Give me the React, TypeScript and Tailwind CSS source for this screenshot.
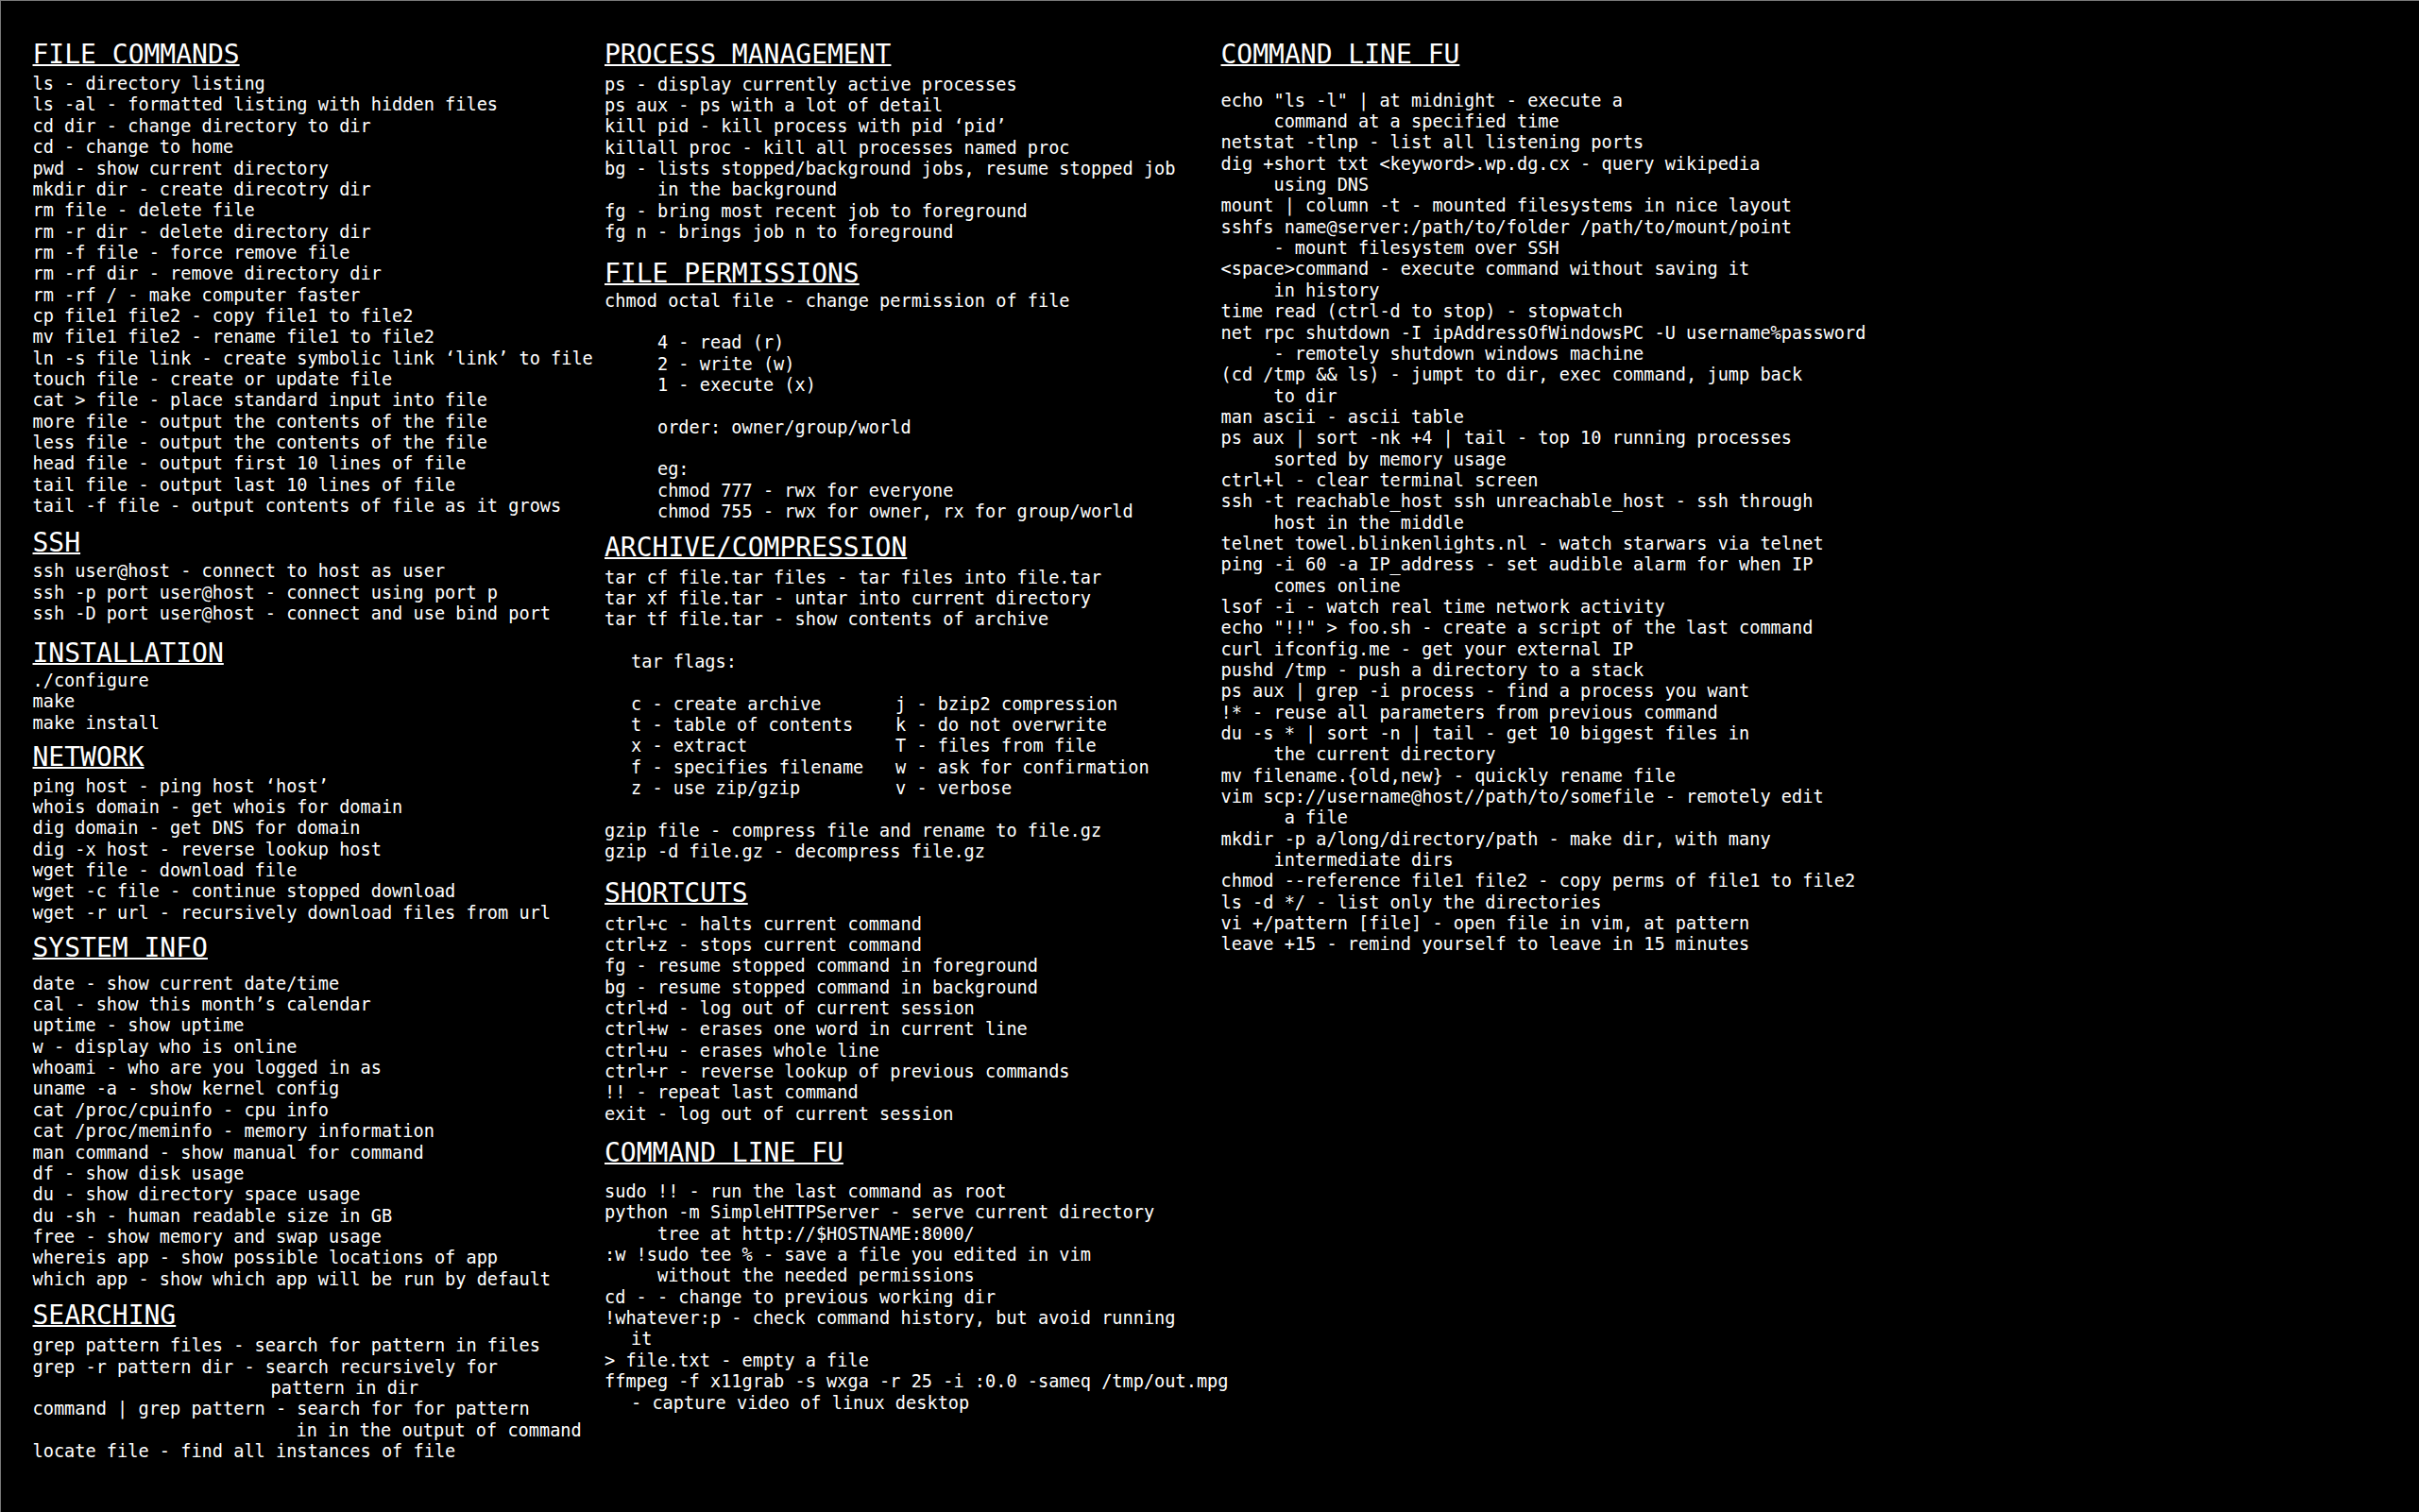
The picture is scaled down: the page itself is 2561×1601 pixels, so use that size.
import clsx from "clsx";
import type { ReactNode } from "react";

// one line of the sheet, fixed height so blank rows keep their space
const Line = ({ children, className }: { children?: ReactNode; className?: string }) => (
  <p className={clsx("h-[22.35px] whitespace-pre text-[18.6px] leading-[22.35px]", className)}>
    {children}
  </p>
);

const Lines = ({ items }: { items: string[] }) => (
  <>
    {items.map((t, i) => (
      <Line key={i}>{t}</Line>
    ))}
  </>
);

const Heading = ({ children, className }: { children: ReactNode; className?: string }) => (
  <h2
    className={clsx(
      "h-[30px] whitespace-pre text-[28px] leading-[30px] underline decoration-[1.5px] underline-offset-[1px]",
      className
    )}
  >
    {children}
  </h2>
);

const fileCommands = [
  "ls - directory listing",
  "ls -al - formatted listing with hidden files",
  "cd dir - change directory to dir",
  "cd - change to home",
  "pwd - show current directory",
  "mkdir dir - create direcotry dir",
  "rm file - delete file",
  "rm -r dir - delete directory dir",
  "rm -f file - force remove file",
  "rm -rf dir - remove directory dir",
  "rm -rf / - make computer faster",
  "cp file1 file2 - copy file1 to file2",
  "mv file1 file2 - rename file1 to file2",
  "ln -s file link - create symbolic link \u2018link\u2019 to file",
  "touch file - create or update file",
  "cat > file - place standard input into file",
  "more file - output the contents of the file",
  "less file - output the contents of the file",
  "head file - output first 10 lines of file",
  "tail file - output last 10 lines of file",
  "tail -f file - output contents of file as it grows",
];

const ssh = [
  "ssh user@host - connect to host as user",
  "ssh -p port user@host - connect using port p",
  "ssh -D port user@host - connect and use bind port",
];

const installation = ["./configure", "make", "make install"];

const network = [
  "ping host - ping host \u2018host\u2019",
  "whois domain - get whois for domain",
  "dig domain - get DNS for domain",
  "dig -x host - reverse lookup host",
  "wget file - download file",
  "wget -c file - continue stopped download",
  "wget -r url - recursively download files from url",
];

const systemInfo = [
  "date - show current date/time",
  "cal - show this month\u2019s calendar",
  "uptime - show uptime",
  "w - display who is online",
  "whoami - who are you logged in as",
  "uname -a - show kernel config",
  "cat /proc/cpuinfo - cpu info",
  "cat /proc/meminfo - memory information",
  "man command - show manual for command",
  "df - show disk usage",
  "du - show directory space usage",
  "du -sh - human readable size in GB",
  "free - show memory and swap usage",
  "whereis app - show possible locations of app",
  "which app - show which app will be run by default",
];

const processes = [
  "ps - display currently active processes",
  "ps aux - ps with a lot of detail",
  "kill pid - kill process with pid \u2018pid\u2019",
  "killall proc - kill all processes named proc",
  "bg - lists stopped/background jobs, resume stopped job",
  "     in the background",
  "fg - bring most recent job to foreground",
  "fg n - brings job n to foreground",
];

const permissions = [
  "chmod octal file - change permission of file",
  "",
  "     4 - read (r)",
  "     2 - write (w)",
  "     1 - execute (x)",
  "",
  "     order: owner/group/world",
  "",
  "     eg:",
  "     chmod 777 - rwx for everyone",
  "     chmod 755 - rwx for owner, rx for group/world",
];

const tarFlags: [string, string][] = [
  ["c - create archive", "j - bzip2 compression"],
  ["t - table of contents", "k - do not overwrite"],
  ["x - extract", "T - files from file"],
  ["f - specifies filename", "w - ask for confirmation"],
  ["z - use zip/gzip", "v - verbose"],
];

const shortcuts = [
  "ctrl+c - halts current command",
  "ctrl+z - stops current command",
  "fg - resume stopped command in foreground",
  "bg - resume stopped command in background",
  "ctrl+d - log out of current session",
  "ctrl+w - erases one word in current line",
  "ctrl+u - erases whole line",
  "ctrl+r - reverse lookup of previous commands",
  "!! - repeat last command",
  "exit - log out of current session",
];

const fu = [
  'echo "ls -l" | at midnight - execute a',
  "     command at a specified time",
  "netstat -tlnp - list all listening ports",
  "dig +short txt <keyword>.wp.dg.cx - query wikipedia",
  "     using DNS",
  "mount | column -t - mounted filesystems in nice layout",
  "sshfs name@server:/path/to/folder /path/to/mount/point",
  "     - mount filesystem over SSH",
  "<space>command - execute command without saving it",
  "     in history",
  "time read (ctrl-d to stop) - stopwatch",
  "net rpc shutdown -I ipAddressOfWindowsPC -U username%password",
  "     - remotely shutdown windows machine",
  "(cd /tmp && ls) - jumpt to dir, exec command, jump back",
  "     to dir",
  "man ascii - ascii table",
  "ps aux | sort -nk +4 | tail - top 10 running processes",
  "     sorted by memory usage",
  "ctrl+l - clear terminal screen",
  "ssh -t reachable_host ssh unreachable_host - ssh through",
  "     host in the middle",
  "telnet towel.blinkenlights.nl - watch starwars via telnet",
  "ping -i 60 -a IP_address - set audible alarm for when IP",
  "     comes online",
  "lsof -i - watch real time network activity",
  'echo "!!" > foo.sh - create a script of the last command',
  "curl ifconfig.me - get your external IP",
  "pushd /tmp - push a directory to a stack",
  "ps aux | grep -i process - find a process you want",
  "!* - reuse all parameters from previous command",
  "du -s * | sort -n | tail - get 10 biggest files in",
  "     the current directory",
  "mv filename.{old,new} - quickly rename file",
  "vim scp://username@host//path/to/somefile - remotely edit",
  "      a file",
  "mkdir -p a/long/directory/path - make dir, with many",
  "     intermediate dirs",
  "chmod --reference file1 file2 - copy perms of file1 to file2",
  "ls -d */ - list only the directories",
  "vi +/pattern [file] - open file in vim, at pattern",
  "leave +15 - remind yourself to leave in 15 minutes",
];

export default function App() {
  return (
    <div className="flex min-h-screen w-full border-l border-t border-[#7a7a7a] bg-black pl-[33.5px] pt-[42.3px] font-['DejaVu_Sans_Mono',monospace] text-white">
      {/* left column */}
      <section className="w-[605.5px] shrink-0">
        <Heading className="mb-[4.85px]">FILE COMMANDS</Heading>
        <Lines items={fileCommands} />

        <Heading className="mb-[4.15px] mt-[12.8px]">SSH</Heading>
        <Lines items={ssh} />

        <Heading className="mb-[3.45px] mt-[15.2px]">INSTALLATION</Heading>
        <Lines items={installation} />

        <Heading className="mb-[4.95px] mt-[9.8px]">NETWORK</Heading>
        <Lines items={network} />

        <Heading className="mb-[12.15px] mt-[10.5px]">SYSTEM INFO</Heading>
        <Lines items={systemInfo} />

        <Heading className="mb-[6.15px] mt-[12.3px]">SEARCHING</Heading>
        <Line>grep pattern files - search for pattern in files</Line>
        <Line>grep -r pattern dir - search recursively for</Line>
        <Line className="pl-[252px]">pattern in dir</Line>
        <Line>command | grep pattern - search for for pattern</Line>
        <Line className="pl-[279px]">in in the output of command</Line>
        <Line>locate file - find all instances of file</Line>
      </section>

      {/* middle column */}
      <section className="w-[652.5px] shrink-0">
        <Heading className="mb-[5.45px]">PROCESS MANAGEMENT</Heading>
        <Lines items={processes} />

        <Heading className="mb-[2.15px] mt-[18px]">FILE PERMISSIONS</Heading>
        <Lines items={permissions} />

        <Heading className="mb-[5.45px] mt-[11.9px]">ARCHIVE/COMPRESSION</Heading>
        <Line>tar cf file.tar files - tar files into file.tar</Line>
        <Line>tar xf file.tar - untar into current directory</Line>
        <Line>tar tf file.tar - show contents of archive</Line>
        <Line />
        <Line className="pl-[28px]">tar flags:</Line>
        <Line />
        <div className="grid grid-cols-[280px_1fr] pl-[28px]">
          {tarFlags.map(([a, b]) => (
            <div key={a} className="contents">
              <Line>{a}</Line>
              <Line>{b}</Line>
            </div>
          ))}
        </div>
        <Line />
        <Line>gzip file - compress file and rename to file.gz</Line>
        <Line>gzip -d file.gz - decompress file.gz</Line>

        <Heading className="mb-[7.15px] mt-[17px]">SHORTCUTS</Heading>
        <Lines items={shortcuts} />

        <Heading className="mb-[15.45px] mt-[14.5px]">COMMAND LINE FU</Heading>
        <Line>sudo !! - run the last command as root</Line>
        <Line>python -m SimpleHTTPServer - serve current directory</Line>
        <Line>{"     tree at http://$HOSTNAME:8000/"}</Line>
        <Line>:w !sudo tee % - save a file you edited in vim</Line>
        <Line>{"     without the needed permissions"}</Line>
        <Line>cd - - change to previous working dir</Line>
        <Line>!whatever:p - check command history, but avoid running</Line>
        <Line className="pl-[28px]">it</Line>
        <Line>{"> file.txt - empty a file"}</Line>
        <Line>ffmpeg -f x11grab -s wxga -r 25 -i :0.0 -sameq /tmp/out.mpg</Line>
        <Line className="pl-[28px]">- capture video of linux desktop</Line>
      </section>

      {/* right column */}
      <section className="flex-1">
        <Heading className="mb-[22.45px]">COMMAND LINE FU</Heading>
        <Lines items={fu} />
      </section>
    </div>
  );
}
